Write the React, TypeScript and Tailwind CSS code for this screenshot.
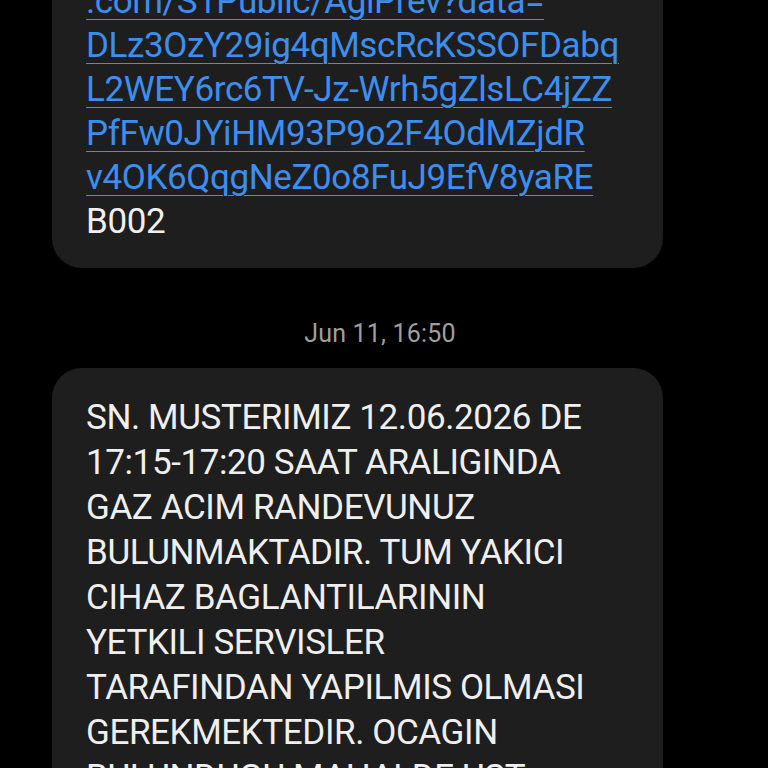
import { FC } from 'react';

const linkLines = [
  '.com/S1Public/AgiPrev?data=',
  'DLz3OzY29ig4qMscRcKSSOFDabq',
  'L2WEY6rc6TV-Jz-Wrh5gZlsLC4jZZ',
  'PfFw0JYiHM93P9o2F4OdMZjdR',
  'v4OK6QqgNeZ0o8FuJ9EfV8yaRE',
];

const messageLines = [
  'SN. MUSTERIMIZ 12.06.2026 DE',
  '17:15-17:20 SAAT ARALIGINDA',
  'GAZ ACIM RANDEVUNUZ',
  'BULUNMAKTADIR. TUM YAKICI',
  'CIHAZ BAGLANTILARININ',
  'YETKILI SERVISLER',
  'TARAFINDAN YAPILMIS OLMASI',
  'GEREKMEKTEDIR. OCAGIN',
  'BULUNDUGU MAHALDE UST',
];

const App: FC = () => {
  return (
    <div className="w-[768px] h-[768px] overflow-hidden bg-black font-['Roboto','Liberation_Sans',sans-serif]">
      <div className="flex flex-col">
        <div className="ml-[52px] w-[611px] -mt-[46px] rounded-[30px] bg-[#1e1e1e] pl-[34px] pr-[16px] pt-[26px] pb-[24px] text-[35px] leading-[44px] tracking-[-0.4px]">
          <a className="block text-[#3c8ff0] underline decoration-[1px] underline-offset-[6px]">
            {linkLines.map((line) => (
              <span key={line} className="block whitespace-nowrap">
                {line}
              </span>
            ))}
          </a>
          <span className="block text-[#efefef]">B002</span>
        </div>

        <div className="pt-[51px] pb-[19px] pr-[8px] text-center text-[25px] leading-[30px] tracking-[0.2px] text-[#9f9f9f]">
          Jun 11, 16:50
        </div>

        <div className="ml-[52px] w-[611px] rounded-[30px] bg-[#1e1e1e] pl-[34px] pr-[16px] pt-[27px] pb-[26px] text-[35px] leading-[45px] tracking-[-0.4px] text-[#efefef]">
          {messageLines.map((line) => (
            <span key={line} className="block whitespace-nowrap">
              {line}
            </span>
          ))}
        </div>
      </div>
    </div>
  );
};

export default App;
